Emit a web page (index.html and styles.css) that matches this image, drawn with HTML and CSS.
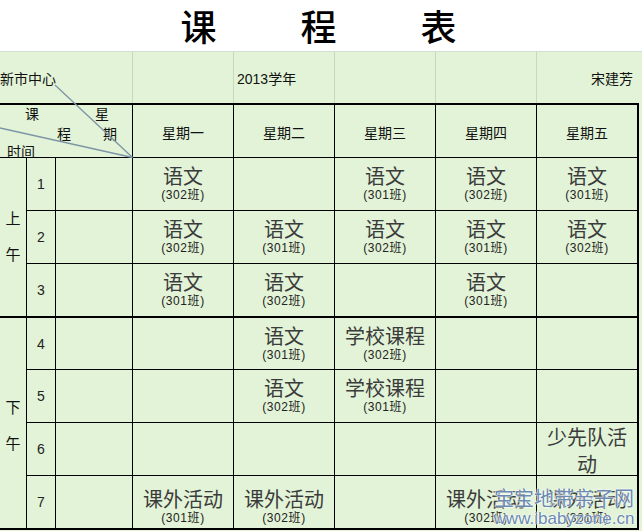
FILE: index.html
```html
<!DOCTYPE html>
<html lang="zh-CN">
<head>
<meta charset="utf-8">
<title>课程表</title>
<link rel="stylesheet" href="styles.css">
</head>
<body>
<div class="page">
  <h1 class="title"><span>课</span><span>程</span><span>表</span></h1>
  <div class="info">
    <div class="info-cell">新市中心</div>
    <div class="info-cell"></div>
    <div class="info-cell">2013学年</div>
    <div class="info-cell"></div>
    <div class="info-cell"></div>
    <div class="info-cell right">宋建芳</div>
  </div>
  <div class="sheet">
    <div class="block am">
      <div class="c corner">
        <div class="cl l1"><span class="w1">课</span><span class="w2">星</span></div>
        <div class="cl l2"><span class="w3">程</span><span class="w4">期</span></div>
        <div class="cl l3"><span>时间</span></div>
      </div>
      <div class="c head">星期一</div>
      <div class="c head">星期二</div>
      <div class="c head">星期三</div>
      <div class="c head">星期四</div>
      <div class="c head">星期五</div>

      <div class="c half am-span"><span>上</span><span>午</span></div>
      <div class="c num">1</div><div class="c"></div>
      <div class="c"><span class="m">语文</span><span class="s">(302班)</span></div>
      <div class="c"></div>
      <div class="c"><span class="m">语文</span><span class="s">(301班)</span></div>
      <div class="c"><span class="m">语文</span><span class="s">(302班)</span></div>
      <div class="c"><span class="m">语文</span><span class="s">(301班)</span></div>

      <div class="c num">2</div><div class="c"></div>
      <div class="c"><span class="m">语文</span><span class="s">(302班)</span></div>
      <div class="c"><span class="m">语文</span><span class="s">(301班)</span></div>
      <div class="c"><span class="m">语文</span><span class="s">(302班)</span></div>
      <div class="c"><span class="m">语文</span><span class="s">(301班)</span></div>
      <div class="c"><span class="m">语文</span><span class="s">(302班)</span></div>

      <div class="c num">3</div><div class="c"></div>
      <div class="c"><span class="m">语文</span><span class="s">(301班)</span></div>
      <div class="c"><span class="m">语文</span><span class="s">(302班)</span></div>
      <div class="c"></div>
      <div class="c"><span class="m">语文</span><span class="s">(301班)</span></div>
      <div class="c"></div>
    </div>
    <div class="block pm">
      <div class="c half pm-span"><span>下</span><span>午</span></div>
      <div class="c num">4</div><div class="c"></div>
      <div class="c"></div>
      <div class="c"><span class="m">语文</span><span class="s">(301班)</span></div>
      <div class="c"><span class="m">学校课程</span><span class="s">(302班)</span></div>
      <div class="c"></div>
      <div class="c"></div>

      <div class="c num">5</div><div class="c"></div>
      <div class="c"></div>
      <div class="c"><span class="m">语文</span><span class="s">(302班)</span></div>
      <div class="c"><span class="m">学校课程</span><span class="s">(301班)</span></div>
      <div class="c"></div>
      <div class="c"></div>

      <div class="c num">6</div><div class="c"></div>
      <div class="c"></div>
      <div class="c"></div>
      <div class="c"></div>
      <div class="c"></div>
      <div class="c wrap"><span class="m">少先队活动</span></div>

      <div class="c num">7</div><div class="c"></div>
      <div class="c low"><span class="m">课外活动</span><span class="s">(301班)</span></div>
      <div class="c low"><span class="m">课外活动</span><span class="s">(302班)</span></div>
      <div class="c low"></div>
      <div class="c low"><span class="m">课外活动</span><span class="s">(302班)</span></div>
      <div class="c low"><span class="m">课外活动</span><span class="s">(301班)</span></div>
    </div>
  </div>
  <svg class="diag" width="140" height="160" viewBox="0 0 140 160">
    <line x1="55" y1="85" x2="132.5" y2="157.5"/>
    <line x1="0" y1="128" x2="132.5" y2="157.5"/>
  </svg>
  <div class="watermark">
    <div class="wm-cn">宝宝地带亲子网</div>
    <div class="wm-en">www.ibabyzone.cn</div>
  </div>
</div>
</body>
</html>
```
FILE: styles.css
```css
html, body {
  margin: 0;
  padding: 0;
}
body {
  background: #e2f3d7;
  overflow: hidden;
  font-family: "Liberation Sans", "Noto Sans CJK SC", sans-serif;
  color: #111;
}
.page {
  position: relative;
  width: 642px;
  height: 531px;
  background: #e2f3d7;
}
.title {
  box-sizing: border-box;
  margin: 0;
  height: 52px;
  background: #fff;
  border-bottom: 1px solid #d3ddd0;
  display: flex;
  justify-content: center;
  align-items: center;
  gap: 84px;
  padding-right: 5px;
  font-family: "Noto Sans CJK SC", sans-serif;
  font-size: 36px;
  font-weight: 500;
  color: #000;
  line-height: 51px;
}
.info {
  height: 51px;
  display: grid;
  grid-template-columns: 132px repeat(5, 101px) 1fr;
  font-size: 14px;
  color: #111;
}
.info-cell {
  box-sizing: border-box;
  display: flex;
  align-items: center;
  padding-left: 3px;
  padding-top: 1px;
  border-left: 1px solid #c8d8be;
}
.info-cell:first-child {
  border-left: 0;
  padding-left: 0;
}
.info-cell.right {
  justify-content: flex-end;
  padding-right: 4px;
}
.sheet {
  width: 637px;
  background: #000;
  padding: 2px 2px 2px 0;
  display: flex;
  flex-direction: column;
  gap: 2px;
}
.block {
  display: grid;
  gap: 1px;
  grid-template-columns: 26px 28px 76px repeat(5, 100px);
}
.am {
  grid-template-rows: repeat(4, 52px);
}
.pm {
  grid-template-rows: 51px 52px 52px 52px;
}
.c {
  background: #e2f3d7;
  display: flex;
  flex-direction: column;
  align-items: center;
  justify-content: center;
  text-align: center;
}
.corner {
  grid-column: span 3;
  display: block;
  text-align: left;
  font-size: 14px;
  color: #111;
}
.cl {
  display: flex;
  height: 20px;
  line-height: 20px;
}
.l1 { margin-top: -1px; }
.l3 { height: 17px; line-height: 17px; }
.w1 { margin-left: 25px; }
.w2 { margin-left: 56px; }
.w3 { margin-left: 57px; }
.w4 { margin-left: 32px; }
.l3 span { margin-left: 7px; }
.head {
  font-size: 14px;
  padding-top: 1px;
}
.half {
  font-size: 15px;
  line-height: 36px;
}
.am-span { grid-row: span 3; }
.pm-span { grid-row: span 4; padding-top: 6px; box-sizing: border-box; }
.num {
  font-size: 14px;
  color: #222;
}
.m {
  font-size: 20px;
  line-height: 22px;
  color: #3b3b3b;
}
.s {
  font-size: 12px;
  line-height: 14px;
  letter-spacing: 0.6px;
  color: #222;
}
.wrap {
  padding: 6px 4px 0;
  box-sizing: border-box;
}
.wrap .m {
  line-height: 27px;
}
.low {
  padding-top: 9px;
  box-sizing: border-box;
}
.diag {
  position: absolute;
  left: 0;
  top: 0;
  pointer-events: none;
}
.diag line {
  stroke: #7d95a6;
  stroke-width: 1.3;
}
.watermark {
  position: absolute;
  left: 491px;
  top: 486px;
  width: 146px;
  text-align: center;
  color: #6a8ab0;
  text-shadow: 0 0 2px #fff, 0 0 2px #fff, 0 0 1px #fff;
}
.wm-cn {
  font-family: "Noto Sans CJK SC", sans-serif;
  font-size: 20px;
  line-height: 24px;
}
.wm-en {
  font-size: 17px;
  line-height: 18px;
}
```
